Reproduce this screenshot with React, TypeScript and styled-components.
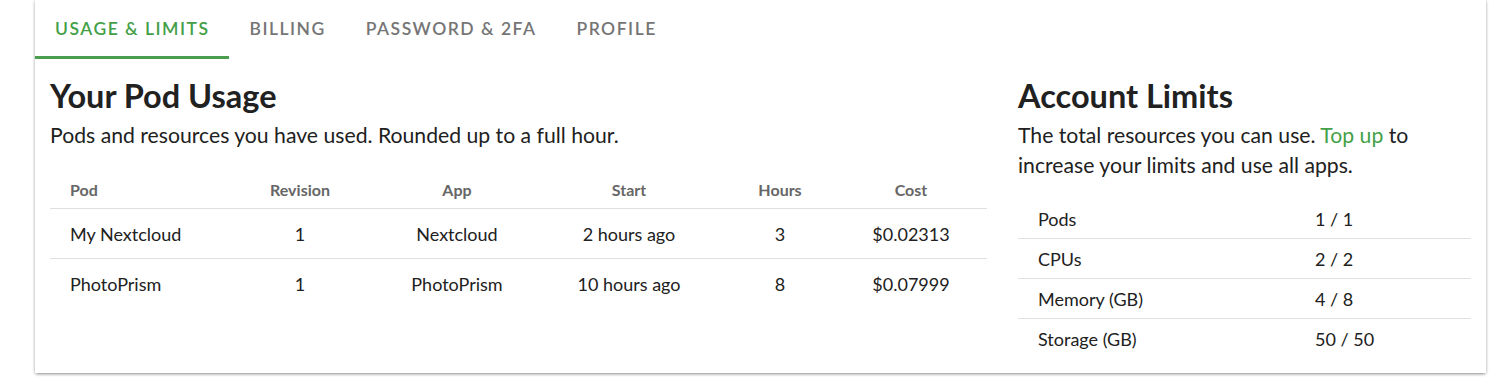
import React from "react";
import styled, { createGlobalStyle } from "styled-components";

const GlobalStyle = createGlobalStyle`
  html, body {
    margin: 0;
    padding: 0;
    background: #ffffff;
    font-family: Lato, "Noto Sans", sans-serif;
    color: #212121;
  }
`;

const Page = styled.div`
  padding: 0 19px 16px 35px;
  width: 1451px;
`;

const Card = styled.div`
  background: #fff;
  box-shadow: 0 2px 3px -1px rgba(0, 0, 0, 0.3), 0 1px 3px 0 rgba(0, 0, 0, 0.12),
    -1px 0 3px rgba(0, 0, 0, 0.08), 1px 0 3px rgba(0, 0, 0, 0.08);
  padding-bottom: 14px;
`;

const TabBar = styled.div`
  display: flex;
  height: 59px;
`;

const Tab = styled.div<{ active?: boolean }>`
  display: flex;
  align-items: center;
  justify-content: center;
  padding: 1px 20px 0;
  font-size: 17.5px;
  font-weight: 600;
  letter-spacing: 1.5px;
  text-transform: uppercase;
  color: ${(p) => (p.active ? "#43a047" : "#757575")};
  border-bottom: 3px solid ${(p) => (p.active ? "#4c9e4f" : "transparent")};
`;

const Content = styled.div`
  display: grid;
  grid-template-columns: 937px 453px;
  column-gap: 31px;
  padding: 0 15px;
`;

const Section = styled.div`
  display: flex;
  flex-direction: column;
`;

const Title = styled.h2`
  margin: 17px 0 0;
  font-size: 32.5px;
  line-height: 40px;
  font-weight: 700;
  color: #212121;
`;

const Subtitle = styled.p<{ narrow?: boolean }>`
  margin: 4px 0 0;
  font-size: 21.2px;
  line-height: 30px;
  color: #212121;
  max-width: ${(p) => (p.narrow ? "400px" : "none")};
`;

const GreenLink = styled.span`
  color: #43a047;
`;

const UsageTable = styled.table`
  margin-top: 20px;
  width: 937px;
  border-collapse: collapse;
  table-layout: fixed;
  box-shadow: 0 0 1px rgba(0, 0, 0, 0.04);
`;

const Th = styled.th<{ align?: string }>`
  height: 38px;
  padding: 0 20px;
  font-size: 16px;
  font-weight: 700;
  color: #666;
  text-align: ${(p) => p.align || "center"};
  border-bottom: 1px solid #e0e0e0;
`;

const Td = styled.td<{ align?: string; last?: boolean }>`
  height: 49px;
  padding: 0 20px;
  font-size: 18px;
  color: #212121;
  text-align: ${(p) => p.align || "center"};
  border-bottom: 1px solid ${(p) => (p.last ? "transparent" : "#e0e0e0")};
`;

const LimitsTable = styled.div`
  margin-top: 19px;
  display: flex;
  flex-direction: column;
`;

const LimitRow = styled.div<{ last?: boolean }>`
  display: grid;
  grid-template-columns: 277px 1fr;
  height: 39px;
  align-items: center;
  padding-left: 20px;
  font-size: 18px;
  color: #212121;
  border-bottom: 1px solid ${(p) => (p.last ? "transparent" : "#e0e0e0")};
`;

const columns = [
  { label: "Pod", width: 169, align: "left" },
  { label: "Revision", width: 162 },
  { label: "App", width: 152 },
  { label: "Start", width: 192 },
  { label: "Hours", width: 110 },
  { label: "Cost", width: 152 },
];

const pods = [
  ["My Nextcloud", "1", "Nextcloud", "2 hours ago", "3", "$0.02313"],
  ["PhotoPrism", "1", "PhotoPrism", "10 hours ago", "8", "$0.07999"],
];

const limits = [
  ["Pods", "1 / 1"],
  ["CPUs", "2 / 2"],
  ["Memory (GB)", "4 / 8"],
  ["Storage (GB)", "50 / 50"],
];

export default function App() {
  return (
    <Page>
      <GlobalStyle />
      <Card>
        <TabBar>
          <Tab active>Usage &amp; Limits</Tab>
          <Tab>Billing</Tab>
          <Tab>Password &amp; 2FA</Tab>
          <Tab>Profile</Tab>
        </TabBar>
        <Content>
          <Section>
            <Title>Your Pod Usage</Title>
            <Subtitle>Pods and resources you have used. Rounded up to a full hour.</Subtitle>
            <UsageTable>
              <colgroup>
                {columns.map((c) => (
                  <col key={c.label} style={{ width: c.width }} />
                ))}
              </colgroup>
              <thead>
                <tr>
                  {columns.map((c) => (
                    <Th key={c.label} align={c.align}>
                      {c.label}
                    </Th>
                  ))}
                </tr>
              </thead>
              <tbody>
                {pods.map((row, i) => (
                  <tr key={i}>
                    {row.map((cell, j) => (
                      <Td key={j} align={columns[j].align} last={i === pods.length - 1}>
                        {cell}
                      </Td>
                    ))}
                  </tr>
                ))}
              </tbody>
            </UsageTable>
          </Section>
          <Section>
            <Title>Account Limits</Title>
            <Subtitle narrow>
              The total resources you can use. <GreenLink>Top up</GreenLink> to increase your limits and
              use all apps.
            </Subtitle>
            <LimitsTable>
              {limits.map(([name, value], i) => (
                <LimitRow key={name} last={i === limits.length - 1}>
                  <span>{name}</span>
                  <span>{value}</span>
                </LimitRow>
              ))}
            </LimitsTable>
          </Section>
        </Content>
      </Card>
    </Page>
  );
}
